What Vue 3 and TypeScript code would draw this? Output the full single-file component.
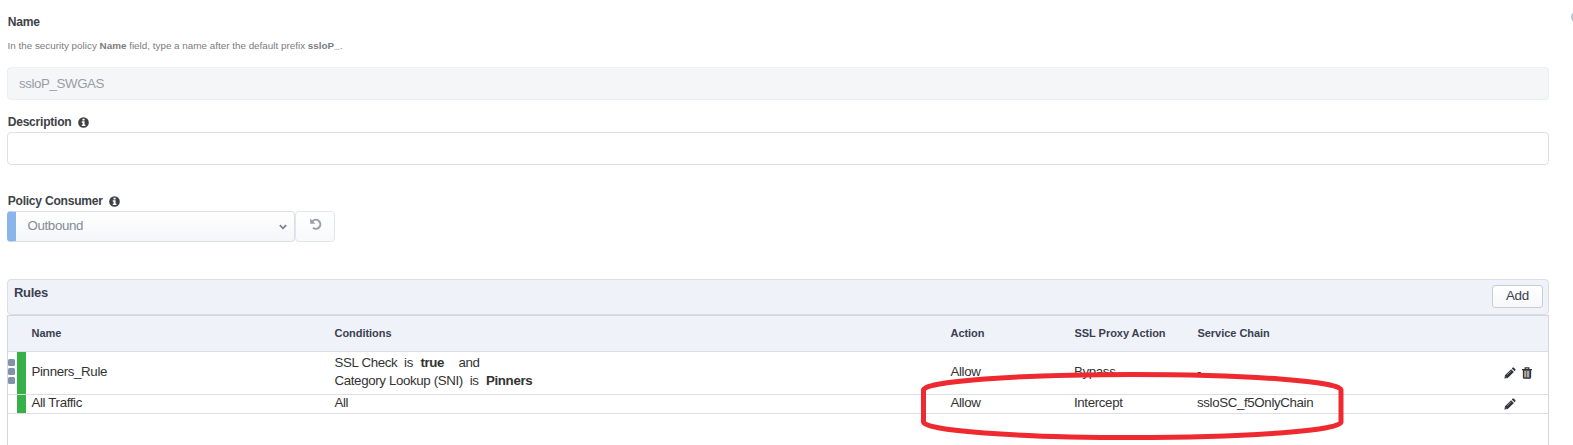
<script setup lang="ts">
interface Rule {
  name: string
  conditions: { subject: string; value?: string; join?: string }[]
  action: string
  proxy: string
  chain: string
  movable: boolean
}

const rules: Rule[] = [
  {
    name: 'Pinners_Rule',
    conditions: [
      { subject: 'SSL Check', value: 'true', join: 'and' },
      { subject: 'Category Lookup (SNI)', value: 'Pinners' },
    ],
    action: 'Allow',
    proxy: 'Bypass',
    chain: '-',
    movable: true,
  },
  {
    name: 'All Traffic',
    conditions: [{ subject: 'All' }],
    action: 'Allow',
    proxy: 'Intercept',
    chain: 'ssloSC_f5OnlyChain',
    movable: false,
  },
]
</script>

<template>
  <main class="page">
    <label class="label name-label">Name</label>
    <p class="help">In the security policy <b>Name</b> field, type a name after the default prefix <b>ssloP_</b>.</p>
    <div class="field disabled"><span>ssloP_SWGAS</span></div>

    <label class="label desc-label"><span>Description</span>
      <svg class="info" viewBox="0 0 12 12"><circle cx="6" cy="6" r="5.8" /><path d="M4.9 1.8h2.3v1.9H4.9zM4.1 4.7h3.1v3.7h.9v1.5H4.1V8.4H5V6.2h-.9z" /></svg>
    </label>
    <div class="field"></div>

    <label class="label consumer-label"><span>Policy Consumer</span>
      <svg class="info" viewBox="0 0 12 12"><circle cx="6" cy="6" r="5.8" /><path d="M4.9 1.8h2.3v1.9H4.9zM4.1 4.7h3.1v3.7h.9v1.5H4.1V8.4H5V6.2h-.9z" /></svg>
    </label>
    <div class="consumer">
      <div class="select">
        <span>Outbound</span>
        <svg class="chevron" viewBox="0 0 8 6"><path d="M.8 1.2 4 4.3 7.2 1.2" /></svg>
      </div>
      <div class="reset">
        <svg viewBox="0 0 12 12"><path d="M2.6 3.2A4.5 4.5 0 1 1 3 9.8" /><path class="tip" d="M.2.5v5.2h5.2z" /></svg>
      </div>
    </div>

    <section class="rules">
      <header class="bar"><h2>Rules</h2><button>Add</button></header>
      <div class="table">
        <div class="row head">
          <span></span><span></span><span class="h-name">Name</span><span class="h-cond">Conditions</span><span class="h-action">Action</span><span class="h-proxy">SSL Proxy Action</span><span class="h-chain">Service Chain</span><span></span>
        </div>
        <div v-for="rule in rules" :key="rule.name" class="row body" :class="{ tall: rule.movable }">
          <span class="grip"><template v-if="rule.movable"><i></i><i></i><i></i></template></span>
          <span class="status"></span>
          <span class="name">{{ rule.name }}</span>
          <div class="conditions">
            <div v-for="c in rule.conditions" :key="c.subject">
              <span>{{ c.subject }}</span><template v-if="c.value"><span class="is">is</span><b>{{ c.value }}</b></template><span v-if="c.join" class="join">{{ c.join }}</span>
            </div>
          </div>
          <span class="action">{{ rule.action }}</span>
          <span class="proxy">{{ rule.proxy }}</span>
          <span class="chain">{{ rule.chain }}</span>
          <span class="tools">
            <svg class="pencil" viewBox="0 0 12 12"><path d="M.4 11.6 1 8.3 7.1 2.2l2.8 2.7-6.2 6.1zM7.8 1.5l.9-.9q.5-.4 1 0l1.7 1.7q.4.5 0 1l-.8.9z" /><path class="shine" d="M3.1 7.8 7.2 3.7M1.4 9.6l1 1" /></svg>
            <svg v-if="rule.movable" class="trash" viewBox="0 0 10 12"><path class="can" d="M1.5 3v7.2q0 1 1 1h5q1 0 1-1V3" /><path class="lid" d="M0 2.6h10M3.2 2V.9h3.6V2" /><path class="warm" d="M3.2 4v6.2" /><path class="cool" d="M6 4v6.2" /></svg>
          </span>
        </div>
      </div>
    </section>
    <span class="edge-dot"></span>
    <svg class="callout" viewBox="0 0 424 70"><rect x="3.5" y="3.5" width="417.5" height="63" rx="208.7" ry="15.5" /></svg>
  </main>
</template>

<style>
body { background: #fff; }
</style>
<style scoped>
* { box-sizing: border-box; }
.page {
  position: relative;
  height: 445px;
  overflow: hidden;
  padding: 14px 24px 0 7px;
  font: 13.3px/18px "Liberation Sans", Arial, sans-serif;
  color: #333;
}
.label { display: flex; align-items: center; height: 16px; padding-left: .7px; font-size: 12.1px; line-height: 16px; font-weight: 700; color: #3e4247; letter-spacing: -.25px; }
.help { height: 14px; margin: 9px 0 14px; padding-left: .5px; font-size: 9.87px; line-height: 14px; color: #7c7c7c; white-space: nowrap; }
.field { height: 33px; border: 1px solid #dcdfe8; border-radius: 4px; background: #fff; }
.disabled { padding: 0 11px; line-height: 32px; background: #f5f6f8; border-color: #eceef1; color: #989ca5; letter-spacing: -.4px; }
.desc-label { margin: 14px 0 2px; }
.consumer-label { margin: 28px 0 2px; }
.info { width: 11px; height: 11px; margin-left: 6.7px; fill: #3e4247; }
.info path { fill: #fff; }
.consumer { display: flex; height: 31px; }
.select { display: flex; align-items: center; width: 288px; padding: 0 7px 2px 11.5px; border: 1px solid #dcdfe8; border-left: 9px solid #89b5ea; border-radius: 4px; background: linear-gradient(#fff, #f5f6f9); color: #858a95; letter-spacing: -.36px; }
.chevron { width: 8px; height: 6px; margin: 3px 0 0 auto; fill: none; stroke: #7d828e; stroke-width: 1.8; }
.reset { display: flex; justify-content: center; width: 40px; padding: 6px 0 0 1px; border: 1px solid #e3e5ec; border-radius: 4px; background: linear-gradient(#fff, #f8f9fb); }
.reset svg { width: 12px; height: 12px; fill: none; stroke: #9a9ea7; stroke-width: 2; }
.reset .tip { fill: #9a9ea7; stroke: none; }
.rules { margin-top: 37px; }
.bar { display: flex; justify-content: space-between; height: 36px; padding: 5px 5px 0 6px; border: 1px solid #dbdee3; border-radius: 4px; background: #eff3f9; }
h2 { margin: -1px 0 0; font-size: 13px; line-height: 17px; color: #3b4050; letter-spacing: -.3px; }
button { width: 51px; height: 23px; padding: 0 0 2px; border: 1px solid #c9ccd5; border-radius: 3px; background: linear-gradient(#fff, #f7f8fa); font: 13.4px/18px "Liberation Sans", Arial, sans-serif; letter-spacing: -.2px; color: #3b4050; }
.table { height: 140px; border: 1px solid #d3d6da; border-bottom: 0; }
.row { display: grid; grid-template-columns: 9px 9px 308px 616px 124px 123px 1fr 52px; align-items: center; border-bottom: 1px solid #dbdee3; }
.row > * { white-space: nowrap; }
.head { height: 36px; background: #eff3f9; font-size: 11px; font-weight: 700; color: #3b4050; padding-bottom: 2px; letter-spacing: -.04px; }
.h-name { padding-left: 5.5px; }
.h-cond, .h-action, .h-proxy, .h-chain { padding-left: .5px; }
.body { height: 19px; letter-spacing: -.36px; }
.body.tall { height: 43px; }
.name { padding-left: 5.5px; }
.conditions { padding-left: .5px; }
.name, .conditions, .action, .chain, .proxy { margin-top: -3px; }
.action { padding-left: .5px; }
.status { align-self: stretch; background: #38b04a; }
.grip { display: flex; flex-direction: column; gap: 2px; margin: -3px 0 0; }
.grip i { width: 7px; height: 6.7px; border-radius: 1.5px; background: #8292aa; }
.is { margin: 0 7.4px 0 6.8px; }
.join { margin-left: 14.4px; }
.tools { display: flex; gap: 7px; padding-left: 8px; }
.pencil { width: 12px; height: 12px; fill: #30343c; }
.shine { fill: none; stroke: #aaa; stroke-width: .8; }
.trash { width: 10px; height: 12px; margin-left: -1px; fill: none; stroke: #30343c; stroke-width: 1.3; }
.trash .can { fill: #6b6258; }
.trash .warm { stroke: #dca66a; stroke-width: 1.7; }
.trash .cool { stroke: #86b7e2; stroke-width: 1.9; }
.edge-dot { position: absolute; left: 1571px; top: 11px; width: 12px; height: 12px; border-radius: 50%; background: #b8c3d4; }
.callout { position: absolute; left: 920px; top: 371px; width: 424px; height: 70px; fill: none; stroke: #ee2a30; stroke-width: 5; }
</style>
